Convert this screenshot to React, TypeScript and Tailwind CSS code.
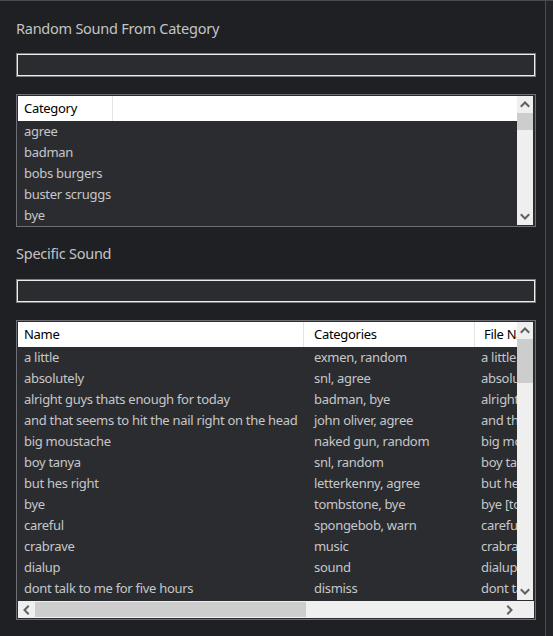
import React from "react";

const FONT = { fontFamily: '"Noto Sans", "Open Sans", sans-serif' };

function Chevron({ dir }: { dir: "up" | "down" | "left" | "right" }) {
  const paths: Record<string, string> = {
    up: "M1.5 6 L5 2.5 L8.5 6",
    down: "M1.5 3 L5 6.5 L8.5 3",
    left: "M6 1.5 L2.5 5 L6 8.5",
    right: "M3 1.5 L6.5 5 L3 8.5",
  };
  return (
    <svg width="10" height="10" viewBox="0 0 10 10">
      <path d={paths[dir]} fill="none" stroke="#606060" strokeWidth="2" strokeLinecap="square" />
    </svg>
  );
}

function VScroll({ thumbTop, thumbH }: { thumbTop: number; thumbH: number }) {
  return (
    <div className="flex w-[16px] flex-col bg-[#efefef]">
      <div className="flex h-[17px] items-center justify-center">
        <Chevron dir="up" />
      </div>
      <div className="relative flex-1">
        <div className="absolute left-0 right-0 bg-[#cdcdcd]" style={{ top: thumbTop, height: thumbH }} />
      </div>
      <div className="flex h-[17px] items-center justify-center">
        <Chevron dir="down" />
      </div>
    </div>
  );
}

const categories = ["agree", "badman", "bobs burgers", "buster scruggs", "bye"];

const sounds: [string, string, string][] = [
  ["a little", "exmen, random", "a little.mp3"],
  ["absolutely", "snl, agree", "absolutely.mp3"],
  ["alright guys thats enough for today", "badman, bye", "alright guys.mp3"],
  ["and that seems to hit the nail right on the head", "john oliver, agree", "and that seems.mp3"],
  ["big moustache", "naked gun, random", "big moustache.mp3"],
  ["boy tanya", "snl, random", "boy tanya.mp3"],
  ["but hes right", "letterkenny, agree", "but hes right.mp3"],
  ["bye", "tombstone, bye", "bye [tombstone].mp3"],
  ["careful", "spongebob, warn", "careful.mp3"],
  ["crabrave", "music", "crabrave.mp3"],
  ["dialup", "sound", "dialup.mp3"],
  ["dont talk to me for five hours", "dismiss", "dont talk to me.mp3"],
];

function TextBox() {
  return (
    <div className="h-[24px] w-[520px] border border-[#7d7d7d] bg-[#2b2c30] shadow-[inset_0_0_0_1px_#ececec]" />
  );
}

export default function App() {
  return (
    <div style={FONT} className="flex h-[636px] w-[553px] overflow-hidden bg-[#1f2023]">
      <div className="flex h-full w-[546px] flex-col border-r border-t border-[#4a4b4f] pl-[16px]">
        <div className="mt-[17px] h-[20px] text-[14.5px] leading-[20px] tracking-[-0.25px] text-[#c4c4c4]">Random Sound From Category</div>
        <div className="mt-[15px]">
          <TextBox />
        </div>

        {/* Category list */}
        <div className="mt-[17px] h-[133px] w-[520px] border border-[#6e6f74] bg-[#2b2c30] p-[1px]">
          <div className="flex h-full">
            <div className="flex w-[499px] flex-col overflow-hidden">
              <div className="flex h-[25px] shrink-0 bg-white text-[13px] leading-[24px] tracking-[-0.3px] text-black">
                <div className="w-[95px] border-r border-[#e3e3e3] pl-[6px]">Category</div>
              </div>
              {categories.map((c) => (
                <div key={c} className="h-[21px] shrink-0 pl-[6px] text-[13px] leading-[21px] tracking-[-0.3px] text-[#c6c7c9]">
                  {c}
                </div>
              ))}
            </div>
            <VScroll thumbTop={0} thumbH={17} />
          </div>
        </div>

        <div className="mt-[16px] h-[20px] text-[14.5px] leading-[20px] tracking-[-0.25px] text-[#c4c4c4]">Specific Sound</div>
        <div className="mt-[16px]">
          <TextBox />
        </div>

        {/* Sounds list */}
        <div className="mt-[17px] h-[300px] w-[520px] border border-[#6e6f74] bg-[#2b2c30] p-[1px]">
          <div className="flex h-full flex-col">
            <div className="flex h-[278px]">
              <div className="flex w-[499px] flex-col overflow-hidden">
                <div className="flex h-[25px] shrink-0 whitespace-nowrap bg-white text-[13px] leading-[24px] tracking-[-0.3px] text-black">
                  <div className="w-[286px] shrink-0 border-r border-[#e3e3e3] pl-[6px]">Name</div>
                  <div className="w-[171px] shrink-0 border-r border-[#e3e3e3] pl-[10px]">Categories</div>
                  <div className="w-[120px] shrink-0 pl-[9px]">File Name</div>
                </div>
                {sounds.map(([n, c, f]) => (
                  <div key={n} className="flex h-[21px] shrink-0 whitespace-nowrap text-[13px] leading-[21px] tracking-[-0.3px] text-[#c6c7c9]">
                    <div className="w-[286px] shrink-0 overflow-hidden pl-[6px]">{n}</div>
                    <div className="w-[171px] shrink-0 overflow-hidden pl-[10px]">{c}</div>
                    <div className="w-[140px] shrink-0 pl-[6px]">{f}</div>
                  </div>
                ))}
              </div>
              <VScroll thumbTop={0} thumbH={44} />
            </div>
            <div className="mt-[1px] flex h-[17px] bg-[#efefef]">
              <div className="flex w-[17px] items-center justify-center">
                <Chevron dir="left" />
              </div>
              <div className="flex flex-1">
                <div className="my-[1px] w-[271px] bg-[#cdcdcd]" />
              </div>
              <div className="flex w-[17px] items-center justify-center">
                <Chevron dir="right" />
              </div>
              <div className="w-[16px]" />
            </div>
          </div>
        </div>
      </div>
      <div className="h-full flex-1 border-t border-[#4a4b4f] bg-[#232427]" />
    </div>
  );
}
